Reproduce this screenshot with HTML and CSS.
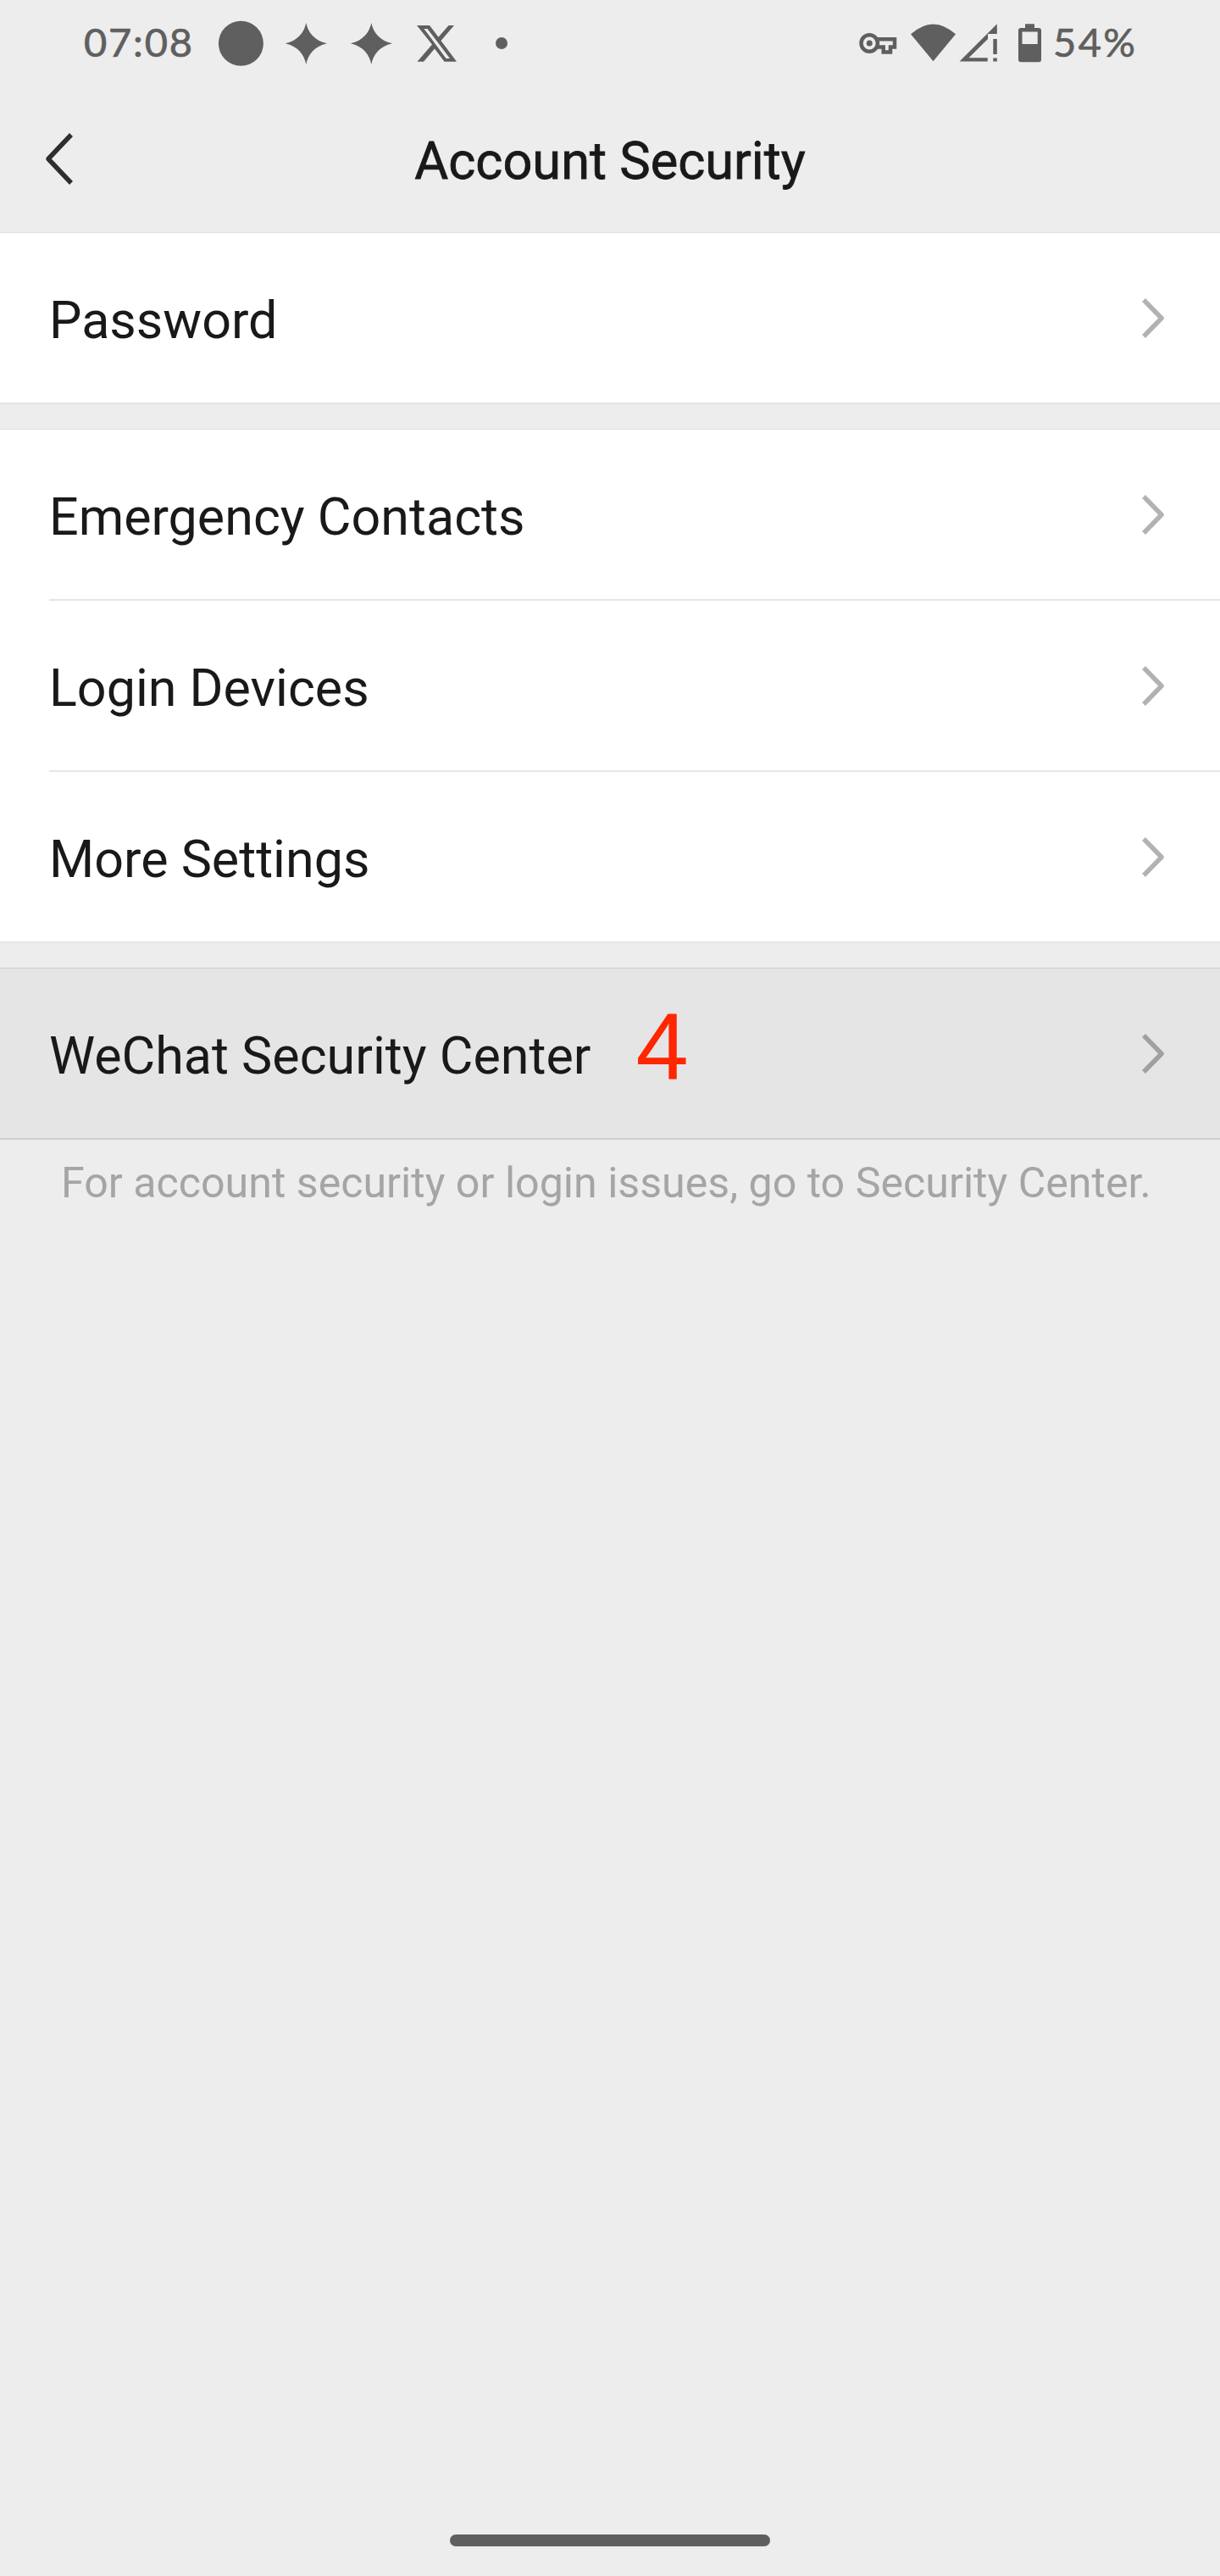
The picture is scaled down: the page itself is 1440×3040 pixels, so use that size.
FILE: index.html
```
<!DOCTYPE html>
<html lang="en">
    <head>
        <meta charset="utf-8">
        <title>Account Security</title>
        <link rel="stylesheet" href="styles.css">
    </head>
    <body>
        <div class="status-bar">
            <span class="time">07:08</span>
            <svg class="notifications" width="352" height="60" viewBox="248 20 352 60">
                <circle cx="284.4" cy="51.3" r="26.5"/>
                <path id="star" d="M361.3 27C363.5 38 371 48 386 51.3C371 54.6 363.5 64.6 361.3 76C359.1 64.6 351.6 54.6 336.8 51.3C351.6 48 359.1 38 361.3 27Z"/>
                <use href="#star" x="77"/>
                <path fill-rule="evenodd" d="M492 30H507L517.5 43.8L529.5 30H536L520.5 48L539 72.7H524.5L513 57.5L500 72.7H492.5L510 52.5ZM500.5 34L526.5 69H531L504.5 34Z"/>
                <circle cx="592" cy="51" r="7"/>
            </svg>
            <svg class="system" width="216" height="60" viewBox="1014 20 216 60">
                <circle cx="1026.2" cy="51" r="9.7" class="line"/>
                <circle cx="1026.2" cy="51" r="3.5"/>
                <path class="line" d="M1034.5 46.3H1056V55.5H1051V61.5H1042.7V55.5H1034.5"/>
                <path d="M1075 40.3Q1101.5 16.5 1128 40.3L1101.5 72.3Z"/>
                <path fill-rule="evenodd" d="M1176.8 28.3V40H1166V46L1143.5 68.3H1165.7V72.6H1132.5ZM1172.3 46H1176.8V64H1172.3ZM1172.3 68.5H1176.8V72.6H1172.3Z"/>
                <path fill-rule="evenodd" d="M1210 28.3H1221V33H1226Q1229 33 1229 36V70.5Q1229 73.3 1226 73.3H1205Q1202 73.3 1202 70.5V36Q1202 33 1205 33H1210ZM1206.5 37.5V52H1224.7V37.5Z"/>
            </svg>
            <span class="battery">54%</span>
        </div>
        <div class="header">
            <svg class="back" width="40" height="66" viewBox="50 155 40 66">
                <path d="M84 159L57 187.5L84 216"/>
            </svg>
            <h1 class="title">Account Security</h1>
        </div>
        <div class="group">
            <div class="row"><span class="label">Password</span><svg class="arrow" width="28" height="48" viewBox="0 0 28 48"><path d="M3 2L24 23.5L3 45"/></svg></div>
        </div>
        <div class="group">
            <div class="row"><span class="label">Emergency Contacts</span><svg class="arrow" width="28" height="48" viewBox="0 0 28 48"><path d="M3 2L24 23.5L3 45"/></svg></div>
            <div class="row"><span class="label">Login Devices</span><svg class="arrow" width="28" height="48" viewBox="0 0 28 48"><path d="M3 2L24 23.5L3 45"/></svg></div>
            <div class="row"><span class="label">More Settings</span><svg class="arrow" width="28" height="48" viewBox="0 0 28 48"><path d="M3 2L24 23.5L3 45"/></svg></div>
        </div>
        <div class="group pressed">
            <div class="row"><span class="label">WeChat Security Center</span><span class="step">4</span><svg class="arrow" width="28" height="48" viewBox="0 0 28 48"><path d="M3 2L24 23.5L3 45"/></svg></div>
        </div>
        <p class="hint">For account security or login issues, go to Security Center.</p>
        <div class="home-bar"></div>
    </body>
</html>
```
FILE: styles.css
```
body {
    margin: 0;
    min-height: 3040px;
    box-sizing: border-box;
    display: flex;
    flex-direction: column;
    background-color: #ededed;
    color: #191919;
    font-family: Roboto, sans-serif;
}

.status-bar {
    height: 100px;
    padding: 0 100px 0 99px;
    display: flex;
    align-items: center;
    color: #5f5f5f;
    font-family: Lato, sans-serif;
    font-size: 47px;
    letter-spacing: 1.8px;
    -webkit-text-stroke: 0.7px #5f5f5f;
}

.status-bar svg {
    flex: none;
    fill: #5f5f5f;
}

.status-bar path,
.status-bar circle {
    -webkit-text-stroke: 0;
}

.time {
    width: 149px;
    padding-bottom: 2px;
}

.notifications {
    margin-right: auto;
}

.system .line {
    fill: none;
    stroke: #5f5f5f;
    stroke-width: 4.5;
}

.battery {
    width: 97px;
    margin-left: 13px;
    padding-bottom: 2px;
    letter-spacing: 2.4px;
}

.header {
    height: 172px;
    display: flex;
    align-items: center;
    padding: 2px 50px 0;
    border-bottom: 1px solid #e1e1e1;
}

.back {
    fill: none;
    stroke: #2e2e2e;
    stroke-width: 5.5;
    stroke-linejoin: round;
}

.title {
    flex: 1;
    margin: 0 40px 0 0;
    padding-top: 3px;
    text-align: center;
    font-size: 61.3px;
    font-weight: 400;
    -webkit-text-stroke: 0.8px #191919;
}

.group {
    margin-bottom: 29px;
    background-color: white;
    border-bottom: 2px solid #e5e5e5;
}

.group + .group {
    border-top: 1px solid #e1e1e1;
}

.row {
    height: 200px;
    margin-left: 58px;
    padding-right: 65px;
    display: flex;
    align-items: center;
}

.row + .row {
    border-top: 2px solid #e5e5e5;
}

.label {
    font-size: 61px;
    padding-top: 6px;
}

.arrow {
    margin-left: auto;
    padding-top: 1px;
    fill: none;
    stroke: #b2b2b2;
    stroke-width: 5.5;
    stroke-linejoin: round;
}

.group.pressed {
    margin-bottom: 0;
    background-color: #e5e5e5;
    border-color: #cecece;
}

.pressed .arrow {
    stroke: #a0a0a0;
}

.step {
    margin-left: 53px;
    padding-bottom: 16px;
    color: #ff2600;
    font-family: "Liberation Sans", sans-serif;
    font-size: 112px;
    line-height: 1;
}

.hint {
    margin: 21px 72px;
    color: #a5a5a5;
    font-size: 50.15px;
    white-space: nowrap;
}

.home-bar {
    width: 378px;
    height: 14px;
    margin: auto auto 35px;
    border-radius: 7px;
    background-color: #5f5f5f;
}
```
